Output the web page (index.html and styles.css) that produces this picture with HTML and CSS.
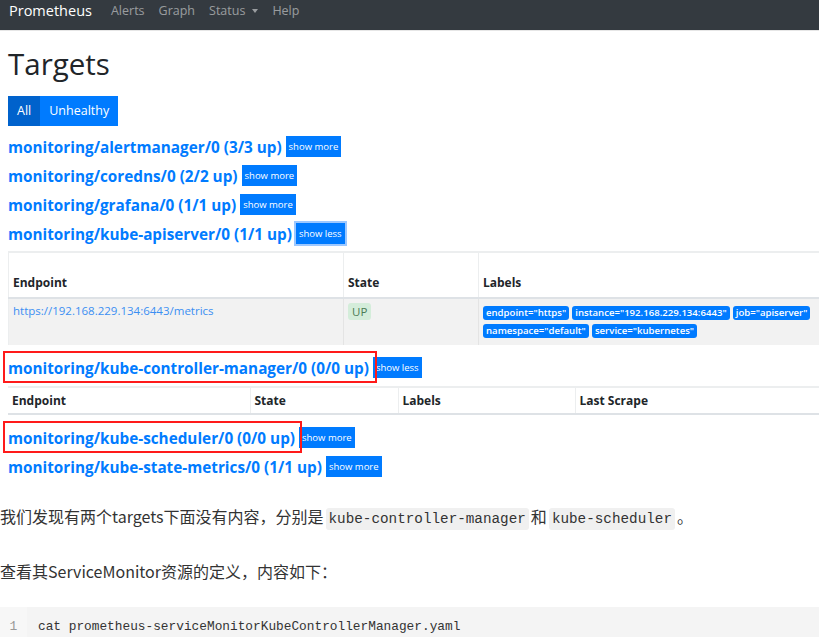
FILE: index.html
```html
<!DOCTYPE html>
<html lang="zh">
<head>
<meta charset="utf-8">
<link rel="stylesheet" href="styles.css">
</head>
<body>
<nav class="navbar">
  <span class="brand">Prometheus</span>
  <span class="nav-link">Alerts</span>
  <span class="nav-link">Graph</span>
  <span class="nav-link">Status <span class="caret"></span></span>
  <span class="nav-link">Help</span>
</nav>
<main class="prom">
  <h1 class="title">Targets</h1>
  <div class="btn-group">
    <span class="btn btn-active">All</span>
    <span class="btn">Unhealthy</span>
  </div>
  <div class="job"><a class="job-title">monitoring/alertmanager/0 (3/3 up)</a><span class="btn-sm">show more</span></div>
  <div class="job"><a class="job-title">monitoring/coredns/0 (2/2 up)</a><span class="btn-sm">show more</span></div>
  <div class="job"><a class="job-title">monitoring/grafana/0 (1/1 up)</a><span class="btn-sm">show more</span></div>
  <div class="job"><a class="job-title">monitoring/kube-apiserver/0 (1/1 up)</a><span class="btn-sm btn-focus">show less</span></div>
  <table class="tbl tbl-1">
    <colgroup><col class="c-ep1"><col class="c-st1"><col></colgroup>
    <thead>
      <tr><th>Endpoint</th><th>State</th><th>Labels</th></tr>
    </thead>
    <tbody>
      <tr>
        <td><a class="ep-link">https://192.168.229.134:6443/metrics</a></td>
        <td><span class="badge-up">UP</span></td>
        <td class="labels">
          <span class="lbl">endpoint="https"</span>
          <span class="lbl">instance="192.168.229.134:6443"</span>
          <span class="lbl">job="apiserver"</span>
          <span class="lbl">namespace="default"</span>
          <span class="lbl">service="kubernetes"</span>
        </td>
      </tr>
    </tbody>
  </table>
  <div class="job job-marked"><a class="job-title">monitoring/kube-controller-manager/0 (0/0 up)</a><span class="btn-sm">show less</span><span class="mark mark-1"></span></div>
  <table class="tbl tbl-2">
    <colgroup><col class="c-ep2"><col class="c-st2"><col class="c-lb2"><col></colgroup>
    <thead>
      <tr><th>Endpoint</th><th>State</th><th>Labels</th><th>Last Scrape</th></tr>
    </thead>
  </table>
  <div class="job job-marked"><a class="job-title">monitoring/kube-scheduler/0 (0/0 up)</a><span class="btn-sm">show more</span><span class="mark mark-2"></span></div>
  <div class="job"><a class="job-title">monitoring/kube-state-metrics/0 (1/1 up)</a><span class="btn-sm">show more</span></div>
</main>
<article class="post">
  <p class="para">我们发现有两个targets下面没有内容，分别是<code class="inline">kube-controller-manager</code>和<code class="inline">kube-scheduler</code>。</p>
  <p class="para para-2">查看其ServiceMonitor资源的定义，内容如下：</p>
  <div class="codeblock">
    <span class="gutter">1</span>
    <code class="code">cat prometheus-serviceMonitorKubeControllerManager.yaml</code>
  </div>
</article>
</body>
</html>
```

FILE: styles.css
```css
* { box-sizing: border-box; }
html, body { margin: 0; padding: 0; }
body {
  width: 819px;
  height: 637px;
  overflow: hidden;
  background: #fff;
  font-family: "Open Sans", "Noto Sans", sans-serif;
  color: #212529;
}

.navbar {
  height: 31px;
  background: #343a40;
  display: flex;
  align-items: flex-start;
  padding: 1px 0 0 9px;
  border-bottom: 1px solid #e6e6e6;
}
.brand {
  color: #fff;
  font-size: 14.5px;
  line-height: 19px;
  margin-right: 19px;
}
.nav-link {
  color: rgba(255,255,255,0.5);
  font-size: 12.5px;
  line-height: 19px;
  margin-right: 14px;
  display: inline-flex;
  align-items: center;
}
.caret {
  display: inline-block;
  width: 0; height: 0;
  margin-left: 7px;
  border-left: 3.5px solid transparent;
  border-right: 3.5px solid transparent;
  border-top: 4px solid rgba(255,255,255,0.5);
}

.prom {
  padding: 0 0 0 8px;
  width: 819px;
}
.title {
  margin: 0;
  padding-top: 14px;
  height: 65px;
  font-size: 29.5px;
  font-weight: 400;
  line-height: 38px;
  color: #212529;
}
.btn-group {
  display: flex;
  height: 30px;
  margin-bottom: 6px;
}
.btn {
  background: #007bff;
  color: #fff;
  font-size: 12.5px;
  line-height: 30px;
  padding: 0 9px;
}
.btn-active { background: #0062cc; }

.job {
  position: relative;
  height: 29px;
  display: flex;
  align-items: center;
}
.job-title {
  color: #007bff;
  font-weight: 700;
  font-size: 15.3px;
  margin-right: 4px;
}
.btn-sm {
  background: #007bff;
  color: #fff;
  font-size: 9.5px;
  height: 21px;
  line-height: 21px;
  padding: 0 3px;
}
.btn-focus {
  box-shadow: 0 0 0 2px #9dc8ff;
}

.tbl {
  border-collapse: collapse;
  width: 811px;
  font-size: 12px;
}
.tbl th {
  text-align: left;
  font-weight: 700;
  border-top: 2px solid #eceeef;
  border-bottom: 2px solid #dee2e6;
  border-left: 1px solid #eceeef;
  padding: 0 4px;
}
.tbl th:first-child, .tbl td:first-child { border-left: 0; }
.tbl-1 { margin-top: 3px; border-left: 1px solid #eceeef; }
.tbl-1 th { height: 46px; vertical-align: bottom; padding-bottom: 6px; }
.tbl-1 td {
  background: #f2f2f2;
  height: 47px;
  vertical-align: top;
  border-left: 1px solid #e4e4e4;
  padding: 4px 4px 0;
}
.c-ep1 { width: 335px; }
.c-st1 { width: 135px; }
.c-ep2 { width: 242px; }
.c-st2 { width: 148px; }
.c-lb2 { width: 177px; }

.ep-link { color: #3b8ff2; font-size: 11.5px; position: relative; top: -1px; }
.badge-up {
  display: inline-block;
  background: #d4edda;
  color: #4a7c55;
  font-size: 11.5px;
  padding: 0 4px;
  line-height: 17px;
  border-radius: 3px;
}
.labels { line-height: 18px; padding-top: 4px !important; padding-right: 0 !important; }
.lbl {
  display: inline-block;
  background: #007bff;
  color: #fff;
  font-size: 9.6px;
  font-weight: 600;
  line-height: 14px;
  padding: 0 3px;
  border-radius: 3px;
  margin-right: 0;
}

.job-marked { margin-top: 8px; }
.tbl-2 { margin-top: 4px; }
.tbl-2 th { height: 27px; vertical-align: middle; }

.mark {
  position: absolute;
  left: -5px;
  top: -2px;
  height: 32px;
  border: 2px solid #ff1a1a;
  pointer-events: none;
}
.mark-1 { width: 374px; }
.mark-2 { width: 299px; }

.post {
  padding-top: 21px;
  font-family: "Noto Sans CJK SC", "Noto Sans", sans-serif;
  color: #333;
}
.para {
  margin: 0;
  font-size: 16px;
  line-height: 28px;
}
.para-2 { margin-top: 24px; }
.inline {
  font-family: "Liberation Mono", "DejaVu Sans Mono", monospace;
  font-size: 14.3px;
  background: #f0f0f0;
  border-radius: 3px;
  padding: 3px 3px;
  margin: 0 2px;
}
.codeblock {
  margin-top: 22px;
  background: #f4f4f4;
  display: flex;
  height: 40px;
  align-items: flex-start;
}
.gutter {
  width: 27px;
  align-self: stretch;
  background: #f7f7f7;
  color: #999;
  font-family: "Liberation Mono", monospace;
  font-size: 13px;
  text-align: center;
  padding-top: 11px;
  line-height: 18px;
}
.code {
  font-family: "Liberation Mono", "DejaVu Sans Mono", monospace;
  font-size: 12.8px;
  color: #333;
  padding-left: 11px;
  padding-top: 11px;
  line-height: 18px;
}
```
